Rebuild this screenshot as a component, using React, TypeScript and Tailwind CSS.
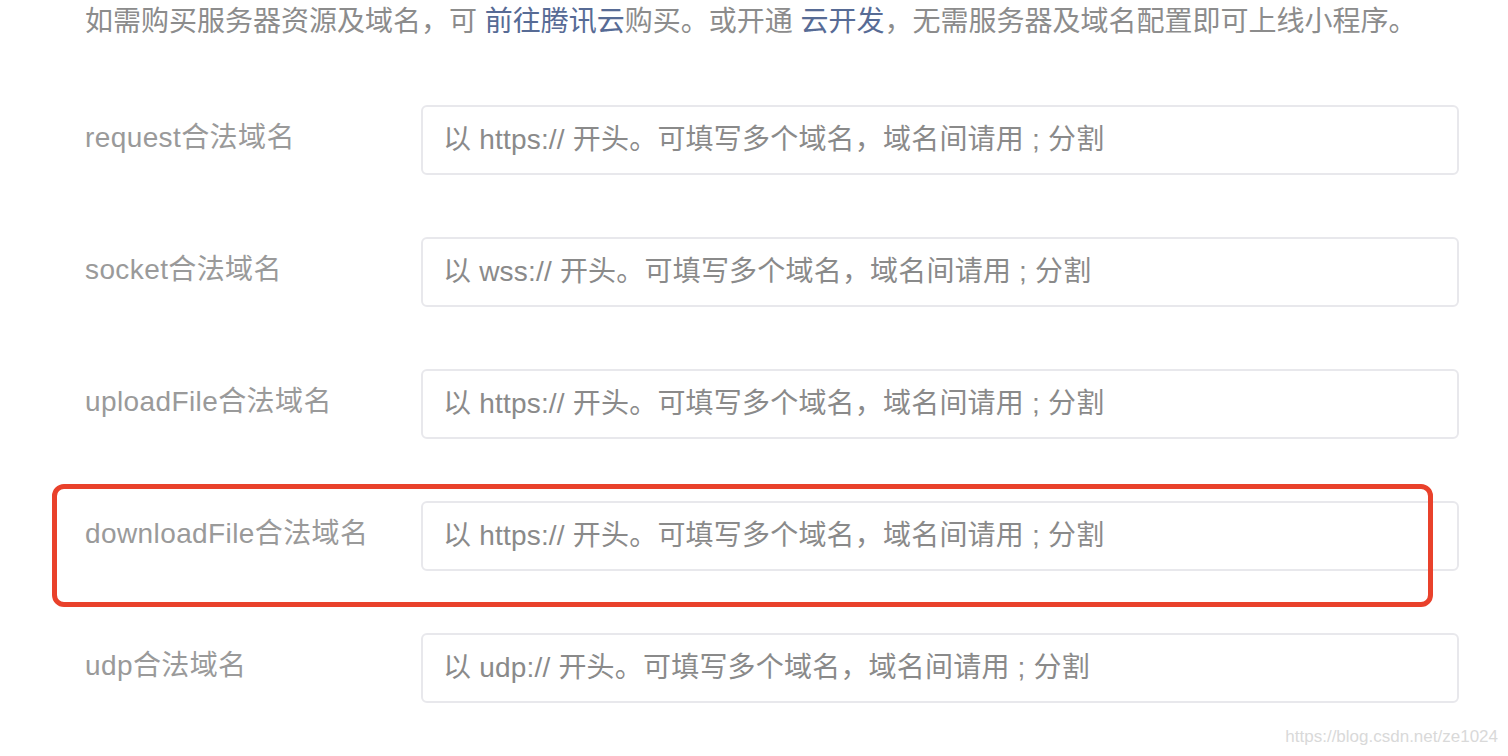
const rows = [
  { label: "request合法域名", placeholder: "以 https:// 开头。可填写多个域名，域名间请用 ; 分割" },
  { label: "socket合法域名", placeholder: "以 wss:// 开头。可填写多个域名，域名间请用 ; 分割" },
  { label: "uploadFile合法域名", placeholder: "以 https:// 开头。可填写多个域名，域名间请用 ; 分割" },
  { label: "downloadFile合法域名", placeholder: "以 https:// 开头。可填写多个域名，域名间请用 ; 分割" },
  { label: "udp合法域名", placeholder: "以 udp:// 开头。可填写多个域名，域名间请用 ; 分割" },
];

export default function App() {
  return (
    <div className="relative w-[1508px] h-[756px] overflow-hidden bg-white font-['Liberation_Sans','Noto_Sans_CJK_SC',sans-serif]">
      <div className="pl-[85px] pr-[49px]">
        <p className="text-[28px] leading-[44px] text-[#8c8c8c] whitespace-nowrap">
          如需购买服务器资源及域名，可 <span className="text-[#576b95]">前往腾讯云</span>购买。或开通{" "}
          <span className="text-[#576b95]">云开发</span>，无需服务器及域名配置即可上线小程序。
        </p>

        <div className="mt-[61px] flex flex-col gap-[62px]">
          {rows.map((row) => (
            <div key={row.label} className="flex items-center">
              <label className="w-[336px] shrink-0 text-[28px] leading-[40px] tracking-[0.4px] text-[#9a9a9a] -mt-[4px]">
                {row.label}
              </label>
              <input
                type="text"
                placeholder={row.placeholder}
                className="flex-1 h-[70px] pl-[20px] pr-[22px] border-2 border-[#e8e8ec] rounded-[6px] text-[28px] tracking-[0.2px] text-[#333] placeholder:text-[#8a8a8a] focus:outline-none"
              />
            </div>
          ))}
        </div>
      </div>

      <div className="absolute left-[52px] top-[484px] w-[1381px] h-[123px] border-[5px] border-[#e9412b] rounded-[12px] pointer-events-none" />

      <span className="absolute right-[10px] top-[727px] text-[17px] leading-[20px] text-[#d9d9d9]">
        https://blog.csdn.net/ze1024
      </span>
    </div>
  );
}
